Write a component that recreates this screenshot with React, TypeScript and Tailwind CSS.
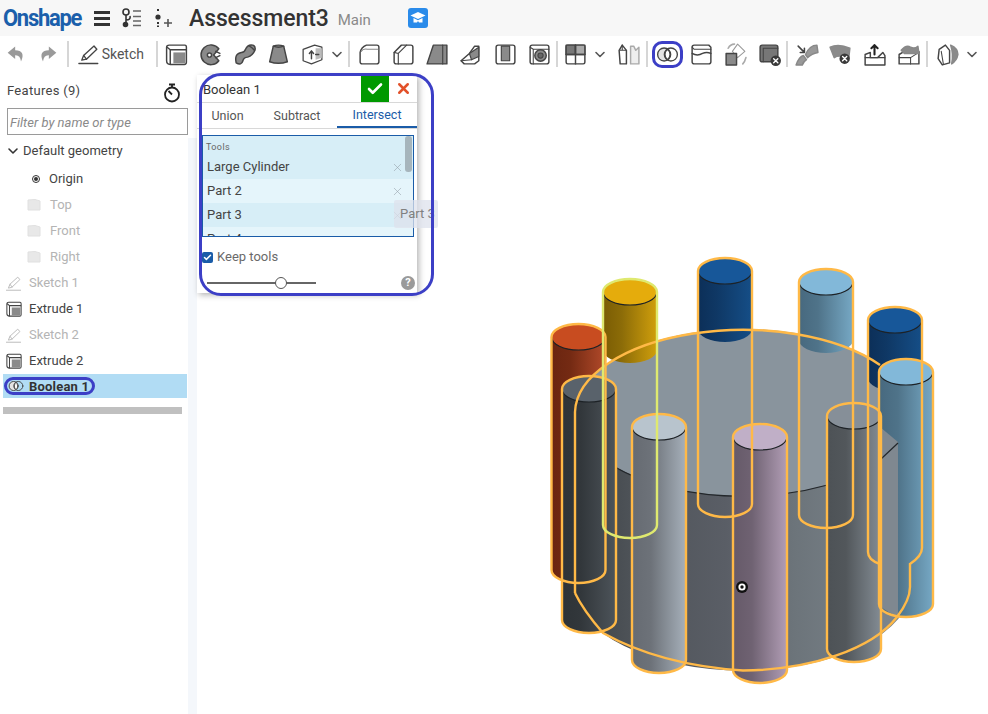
import { ChevronDown, Check, X } from "lucide-react";
import type { ReactNode } from "react";

const font = "font-['Roboto','Liberation_Sans',sans-serif]";

function Ico({ children, size = 25, className = "" }: { children: ReactNode; size?: number; className?: string }) {
  return (
    <svg width={size} height={size} viewBox="0 0 24 24" fill="none" stroke="#444" strokeWidth="1.4" strokeLinejoin="round" strokeLinecap="round" className={className}>
      {children}
    </svg>
  );
}

const G = "#8a8a8a";

const Pencil = ({ size = 25, className = "" }: { size?: number; className?: string }) => (
  <Ico size={size} className={className}>
    <path d="M5 18 L7 13 L18 3 L21 6.5 L10 17 Z" fill="#fff" />
    <path d="M2 21.5 H22" />
    <path d="M7 13 L10 17" />
  </Ico>
);
const Extrude = ({ size = 25 }: { size?: number }) => (
  <Ico size={size}>
    <path d="M2.5 5 Q2.5 3 5 3 H20 Q21.5 3 21.5 5 V19.5 Q21.5 21.5 19.5 21.5 H6 Q2.5 21.5 2.5 18 Z" fill="#fff" />
    <path d="M6 21 V7.5 H21" />
    <rect x="9" y="10" width="11.5" height="10.5" fill={G} stroke="none" />
    <path d="M3 5 L6 7.5" />
  </Ico>
);
const Revolve = () => (
  <Ico>
    <path d="M20 6.5 A9.5 9.5 0 1 0 20 18 L15 12.5 Z" fill={G} />
    <circle cx="11" cy="12.5" r="2" fill="#fff" />
    <path d="M17 9 L21 11 M17 15 L21 13" />
  </Ico>
);
const Sweep = () => (
  <Ico>
    <path d="M4 20 Q2 11 9 10 Q12 10 13 7 Q15 2 20 3 Q23 4 22 8 Q20 13 15 14.5 Q11 15 10.5 18 Q9 23 4 20 Z" fill={G} />
    <path d="M16 3.5 Q19 5 21.5 8" />
  </Ico>
);
const Loft = () => (
  <Ico>
    <path d="M7 4 Q12 2 17 4 L20.5 19 Q12 22 3.5 19 Z" fill={G} />
    <path d="M7 4 Q12 6 17 4" />
  </Ico>
);
const Thicken = () => (
  <Ico>
    <path d="M3 7 L14 3 L21 5 V17 L11 21 L3 18 Z" fill="#fff" strokeWidth="1.2" />
    <path d="M15 6 V17 L21 15 V6 Z" fill="#bbb" stroke="none" />
    <path d="M11 9 V16 M9 11 L11 8.5 L13 11 M15 12 H18" strokeWidth="1.4" />
  </Ico>
);
const Fillet = () => (
  <Ico>
    <path d="M3 10 Q4 5 9 3 H19 Q21 3 21 5 V19 Q21 21 19 21 H5 Q3 21 3 19 Z" fill="#fff" />
    <path d="M4 9 Q6 6 10 7 H20" strokeWidth="1.1" stroke="#888" />
  </Ico>
);
const Chamfer = () => (
  <Ico>
    <path d="M3 10 L10 3 H19 Q21 3 21 5 V19 Q21 21 19 21 H5 Q3 21 3 19 Z" fill="#fff" />
    <path d="M3 10 L7 11 L15 3 M7 11 V21" strokeWidth="1.1" />
  </Ico>
);
const Draft = () => (
  <Ico>
    <path d="M8 3 H21 V21 H2 Z" fill={G} />
    <path d="M17 3 V21" strokeWidth="1.1" />
  </Ico>
);
const Rib = () => (
  <Ico>
    <path d="M2 18 L10 11 L15 4 L19 4 V18 L15 21 H5 Z" fill="#fff" />
    <path d="M10 11 L12 17 L19 14 V5 Z" fill={G} strokeWidth="1.1" />
    <path d="M2 18 L12 17" strokeWidth="1.1" />
  </Ico>
);
const ShellBox = () => (
  <Ico>
    <path d="M3 5 Q3 3 5 3 H19 Q21 3 21 5 V19 Q21 21 19 21 H5 Q3 21 3 19 Z" fill="#fff" />
    <path d="M8 4 V18 H16 V4 Z" fill={G} strokeWidth="1.1" />
  </Ico>
);
const Hole = () => (
  <Ico>
    <path d="M3 5 Q3 3 5 3 H19 Q21 3 21 5 V19 Q21 21 19 21 H5 Q3 21 3 19 Z" fill="#fff" />
    <circle cx="13" cy="13" r="5.5" fill={G} />
    <circle cx="13" cy="13" r="2.5" fill="#666" strokeWidth="1" />
    <path d="M3 5 L6 7 H21 M6 7 V21" strokeWidth="1" />
  </Ico>
);
const Pattern = () => (
  <Ico>
    <rect x="3" y="3" width="18" height="18" rx="1.5" fill="#fff" />
    <rect x="3" y="3" width="9" height="9" fill="#777" />
    <rect x="12" y="3" width="9" height="9" fill="#aaa" />
    <path d="M3 12 H21 M12 3 V21" />
  </Ico>
);
const Mirror = () => (
  <Ico>
    <path d="M3 8 L6 3 L10 8 V21 H4 Z" fill="#fff" />
    <path d="M6 3 V8 M4 8 H10" strokeWidth="1" />
    <g stroke="#aaa">
      <path d="M14 4 H17 L19 8 L22 5 V21 H14 Z" fill="#eee" />
    </g>
  </Ico>
);
const BooleanIcon = ({ size = 23 }: { size?: number }) => (
  <Ico size={size}>
    <circle cx="8.5" cy="12" r="6.8" fill="#e4e4e4" />
    <circle cx="15.5" cy="12" r="6.8" fill="none" />
    <path d="M12 6.5 A7 7 0 0 1 12 17.5 A7 7 0 0 1 12 6.5 Z" fill="#fff" />
  </Ico>
);
const Split = () => (
  <Ico>
    <path d="M3 5 Q3 3 5 3 H19 L21 5 V19 Q21 21 19 21 H5 Q3 21 3 19 Z" fill="#fff" />
    <path d="M3 11 Q8 14 13 11 Q17 9 21 11" />
    <path d="M3 5 L5 7 H21" strokeWidth="1" />
  </Ico>
);
const Transform = () => (
  <Ico>
    <path d="M14 2 L21 9 L14 15 L9 9 Z" fill="#fff" stroke="#999" strokeWidth="1" />
    <path d="M3 11 H13 V22 H3 Z" fill={G} />
    <path d="M5 6 Q7 2 11 2 M19 21 Q21 19 22 15" stroke="#aaa" strokeWidth="1.6" />
  </Ico>
);
const XDot = ({ cx = 18, cy = 18 }: { cx?: number; cy?: number }) => (
  <>
    <circle cx={cx} cy={cy} r="5" fill="#3a3a3a" stroke="none" />
    <path d={`M${cx - 2} ${cy - 2} L${cx + 2} ${cy + 2} M${cx + 2} ${cy - 2} L${cx - 2} ${cy + 2}`} stroke="#fff" strokeWidth="1.3" />
  </>
);
const DeletePart = () => (
  <Ico>
    <path d="M3 5 Q3 3 5 3 H18 Q20 3 20 5 V19 H5 Q3 19 3 17 Z" fill="#777" />
    <path d="M6 19 V6 H20" strokeWidth="1" />
    <XDot />
  </Ico>
);
const MoveFace = () => (
  <Ico>
    <path d="M11 12 Q15 3 22 3 L23 10 Q17 11 13 15 Z" fill="#999" stroke="#888" />
    <path d="M2 22 Q5 14 9 13 L12 17 Q9 19 8 22 Z" fill="#999" stroke="#888" />
    <path d="M4 4 L10 10 M10 6 V10 H6" strokeWidth="1.5" />
  </Ico>
);
const DeleteFace = () => (
  <Ico>
    <path d="M2 5 Q10 1 21 6 L20 15 Q10 12 6 15 Z" fill="#8a8a8a" stroke="#8a8a8a" />
    <XDot cx={16} cy={16} />
  </Ico>
);
const ReplaceFace = () => (
  <Ico>
    <path d="M3 12 L8 10 V15 H15 L20 10 L22 13 V22 H3 Z" fill="#fff" />
    <path d="M3 15 H22" strokeWidth="1" />
    <path d="M12 12 V3 M9 6 L12 3 L15 6" strokeWidth="2" stroke="#222" />
  </Ico>
);
const OffsetSurface = () => (
  <Ico>
    <path d="M3 12 L8 9 H22 V21 H3 Z" fill="#fff" />
    <path d="M3 15 H14 V21 M14 15 L22 10" strokeWidth="1" />
    <path d="M5 8 Q10 2 14 5 Q18 7 21 4 L22 11 H8 Z" fill={G} stroke="#888" />
  </Ico>
);
const Wrap = () => (
  <Ico>
    <path d="M4 7 L10 3 L14 8 V20 L7 22 L3 16 Z" fill="#fff" />
    <path d="M6 9 L8 21" strokeWidth="1" />
    <path d="M15 3 Q22 6 22 12 Q21 18 16 21 Q18 12 15 3 Z" fill={G} stroke="#888" />
  </Ico>
);
const UndoArrow = ({ flip }: { flip?: boolean }) => (
  <svg width="20" height="20" viewBox="0 0 24 24" className={flip ? "-scale-x-100" : ""}>
    <path d="M11 3 L2 10.5 L11 18 V13.5 Q17 13 18 21 Q24 8 11 7.5 Z" fill="#9a9a9a" />
  </svg>
);

const Sep = ({ className }: { className: string }) => <div className={`w-[2px] h-[26px] bg-[#d6d6d6] shrink-0 ${className}`} />;
const Slot = ({ children, className = "" }: { children: ReactNode; className?: string }) => (
  <div className={`w-[34px] h-full flex items-center justify-center shrink-0 relative ${className}`}>{children}</div>
);
const Chev = () => (
  <div className="w-[16px] flex justify-center shrink-0">
    <ChevronDown size={17} strokeWidth={2.4} className="text-[#555]" />
  </div>
);

type Peg = { cx: number; cy: number; end: number; dark: string; mid: string; light: string; top: string; line?: string; short?: boolean };

const BACK: Peg[] = [
  { cx: 630, cy: 292, end: 525, dark: "#7a5c04", mid: "#8c6c08", light: "#d09f0c", top: "#e5ac0c", line: "#dfe96f", short: true },
  { cx: 725, cy: 271, end: 504, dark: "#0c2f58", mid: "#0f3865", light: "#154e87", top: "#175799", short: true },
  { cx: 826, cy: 282, end: 515, dark: "#47697f", mid: "#4f7389", light: "#76a8c4", top: "#82b8d9", short: true },
  { cx: 895, cy: 320, end: 551, dark: "#0c2f58", mid: "#0f3865", light: "#154e87", top: "#175799", short: true },
];
const FRONT: Peg[] = [
  { cx: 589, cy: 389, end: 620, dark: "#2e3337", mid: "#32373b", light: "#4d545a", top: "#59626b" },
  { cx: 659, cy: 427, end: 660, dark: "#666b72", mid: "#6d7279", light: "#a6b0ba", top: "#b8c4cd" },
  { cx: 854, cy: 416, end: 649, dark: "#4d5256", mid: "#52575b", light: "#838c94", top: "#868f98" },
  { cx: 760, cy: 437, end: 670, dark: "#665a69", mid: "#6f6272", light: "#b19db5", top: "#c0afc7" },
  { cx: 906, cy: 372, end: 604, dark: "#47697f", mid: "#4f7389", light: "#76a8c4", top: "#82b8d9" },
];
const RED: Peg = { cx: 578.5, cy: 337, end: 570, dark: "#6a2510", mid: "#742a13", light: "#b24a2a", top: "#c84c20" };

const RX = 27;
const RY = 13;

function PegBody({ p, id }: { p: Peg; id: string }) {
  const l = p.cx - RX;
  const r = p.cx + RX;
  const bottom = p.short ? p.cy + 58 : p.end;
  return (
    <g>
      <path d={`M${l} ${p.cy} L${l} ${bottom} A${RX} ${RY} 0 0 0 ${r} ${bottom} L${r} ${p.cy} Z`} fill={`url(#${id})`} />
      <ellipse cx={p.cx} cy={p.cy} rx={RX} ry={RY} fill={p.top} />
      <path d={`M${l} ${p.cy} A${RX} ${RY} 0 0 0 ${r} ${p.cy}`} fill="none" stroke="#1d2226" strokeWidth="1.2" />
    </g>
  );
}

function PegLine({ p }: { p: Peg }) {
  const l = p.cx - RX;
  const r = p.cx + RX;
  return (
    <path
      d={`M${l} ${p.end} L${l} ${p.cy} A${RX} ${RY} 0 0 1 ${r} ${p.cy} L${r} ${p.end} A${RX} ${RY} 0 0 1 ${l} ${p.end} Z`}
      fill="none"
      stroke={p.line ?? "#ffb947"}
      strokeWidth="2.4"
    />
  );
}

function Model() {
  const all = [RED, ...BACK, ...FRONT];
  return (
    <svg width="791" height="640" viewBox="197 74 791 640" className="absolute left-0 top-0">
      <defs>
        {all.map((p, i) => (
          <linearGradient key={i} id={`peg${i}`} x1="0" x2="1" y1="0" y2="0">
            <stop offset="0" stopColor={p.dark} />
            <stop offset="0.35" stopColor={p.mid} />
            <stop offset="1" stopColor={p.light} />
          </linearGradient>
        ))}
        <linearGradient id="disc" x1="0" x2="1" y1="0" y2="0">
          <stop offset="0" stopColor="#3b4044" />
          <stop offset="0.17" stopColor="#4e5358" />
          <stop offset="0.45" stopColor="#5a5e66" />
          <stop offset="0.65" stopColor="#6c747a" />
          <stop offset="1" stopColor="#7f8890" />
        </linearGradient>
      </defs>

      <PegBody p={RED} id="peg0" />
      <path d="M575 412 L575 587 A168 83.5 0 0 0 911 587 L911 412 Z" fill="url(#disc)" />
      <ellipse cx="743" cy="412.5" rx="168" ry="83.5" fill="#89949d" />
      <path d="M603 459 A168 83.5 0 0 0 898 445" fill="none" stroke="#23272b" strokeWidth="1.2" />
      {BACK.map((p, i) => (
        <PegBody key={i} p={p} id={`peg${i + 1}`} />
      ))}
      {FRONT.map((p, i) => (
        <PegBody key={i} p={p} id={`peg${i + 5}`} />
      ))}
      <path d="M880 427 L898 442 L898 616 Q888 613 880 606 Z" fill="#7f8890" />
      <path d="M881 459 L898 443" stroke="#23272b" strokeWidth="1.2" />
      <path d="M881 440 V620" stroke="#3a4045" strokeWidth="1" />

      <circle cx="742" cy="587" r="6" fill="#111" />
      <circle cx="742" cy="587" r="3.6" fill="#fff" />
      <circle cx="742" cy="587" r="1.7" fill="#111" />

      <path d="M575 593 L575 412 A168 83.5 0 0 1 880 365" fill="none" stroke="#ffb947" strokeWidth="2.4" />
      <path d="M575 593 Q583 610 603 633 Q660 665 743 670.5 A168 83.5 0 0 0 897 617 Q910 600 910 587 L910 564 Q922 556 922 548 L922 320 A27 13 0 0 0 868 320 L868 552 Q868 560 880 564" fill="none" stroke="#ffb947" strokeWidth="2.4" />
      {[RED, BACK[1], BACK[2], ...FRONT].map((p, i) => (
        <PegLine key={i} p={p} />
      ))}
      <PegLine p={BACK[0]} />
    </svg>
  );
}

function TreeRow({ icon, label, light, indent = "pl-[5px]", gap = "w-[24px]" }: { icon: ReactNode; label: string; light?: boolean; indent?: string; gap?: string }) {
  return (
    <div className={`h-[26px] flex items-center ${indent}`}>
      <div className={`${gap} flex items-center shrink-0`}>{icon}</div>
      <span className={light ? "text-[#b4b4b4]" : "text-[#444]"}>{label}</span>
    </div>
  );
}

const Plane = () => (
  <svg width="14" height="12" viewBox="0 0 14 12">
    <path d="M1 1 L8 0.5 L13 2 V11 L1 11 Z" fill="#e8e8e8" stroke="#e0e0e0" />
  </svg>
);

function Sidebar() {
  return (
    <aside className="w-[197px] shrink-0 bg-white relative text-[13px] flex">
      <div className="w-[188px] shrink-0 flex flex-col">
        <div className="h-[34px] pl-[7px] pr-[6px] flex items-center justify-between">
          <span className="text-[#444] -mt-[1px] tracking-[0.3px]">Features (9)</span>
          <svg width="20" height="20" viewBox="0 0 20 20" fill="none" stroke="#222" strokeWidth="1.8" className="mt-[3px]">
            <circle cx="10" cy="11.5" r="7" />
            <path d="M7 1.5 H13 M10 1.5 V4 M10 11.5 L6.5 8" />
          </svg>
        </div>
        <div className="ml-[7px] h-[27px] w-[181px] border border-[#9a9a9a] flex items-center pl-[2px] pt-[2px] italic text-[#8a8a8a] shrink-0">Filter by name or type</div>
        <div className="mt-[3px] flex flex-col">
          <div className="h-[26px] flex items-center pl-[5px] text-[#444]">
            <ChevronDown size={18} strokeWidth={2.4} className="text-[#333] w-[16px]" />
            <span className="ml-[2px]">Default geometry</span>
          </div>
          <div className="h-[2px]" />
          <TreeRow indent="pl-[32px]" gap="w-[17px]" label="Origin" icon={<span className="w-[8px] h-[8px] rounded-full border border-[#333] flex items-center justify-center"><span className="w-[4px] h-[4px] rounded-full bg-[#333]" /></span>} />
          <TreeRow indent="pl-[27px]" gap="w-[23px]" label="Top" light icon={<Plane />} />
          <TreeRow indent="pl-[27px]" gap="w-[23px]" label="Front" light icon={<Plane />} />
          <TreeRow indent="pl-[27px]" gap="w-[23px]" label="Right" light icon={<Plane />} />
          <TreeRow label="Sketch 1" light icon={<Pencil size={17} className="opacity-35" />} />
          <TreeRow label="Extrude 1" icon={<Extrude size={18} />} />
          <TreeRow label="Sketch 2" light icon={<Pencil size={17} className="opacity-35" />} />
          <TreeRow label="Extrude 2" icon={<Extrude size={18} />} />
          <div className="ml-[3px] mr-[1px] h-[24px] bg-[#b1dcf4] relative flex items-center pl-[3px]">
            <div className="w-[23px] flex items-center pl-[2px]">
              <BooleanIcon size={16} />
            </div>
            <span className="text-[#333] font-bold tracking-[0.2px] pt-[1px]">Boolean 1</span>
            <div className="absolute left-[1px] top-[3px] w-[91px] h-[18px] rounded-full border-[3px] border-[#3c3fc6]" />
          </div>
          <div className="ml-[3px] mt-[9px] w-[179px] h-[7px] bg-[#c0c0c0]" />
        </div>
      </div>
      <div className="flex-1 mt-[64px] bg-[#f4f7fb]" />
    </aside>
  );
}

function ToolRow({ label, even }: { label: string; even?: boolean }) {
  return (
    <div className={`h-[24px] flex items-center pl-[4px] pr-[9px] justify-between ${even ? "bg-[#e5f5fb]" : "bg-[#d7eef7]"}`}>
      <span className="text-[#444]">{label}</span>
      <X size={13} strokeWidth={1} className="text-[#8f9ba3]" />
    </div>
  );
}

function BooleanDialog() {
  return (
    <div className="absolute left-0 top-[1px] w-[220px] h-[218px] bg-white shadow-[2px_2px_6px_rgba(0,0,0,0.3)] text-[13px]">
      <div className="h-[28px] border-b border-[#d8d8d8] flex items-stretch">
        <span className="flex-1 pl-[6px] pt-[2px] flex items-center text-[#333]">Boolean 1</span>
        <div className="w-[28px] bg-[#009900] flex items-center justify-center">
          <Check size={18} strokeWidth={3.5} className="text-white" />
        </div>
        <div className="w-[28px] flex items-center justify-center">
          <X size={17} strokeWidth={3.5} className="text-[#e2512a]" />
        </div>
      </div>
      <div className="h-[26px] border-b border-[#d8d8d8] flex text-center items-stretch pl-[2px] text-[12.5px]">
        <span className="w-[57px] pt-[2px] flex items-center justify-center text-[#555]">Union</span>
        <span className="w-[80px] pt-[2px] flex items-center justify-center text-[#555] ml-[1px]">Subtract</span>
        <span className="w-[80px] pt-[2px] flex items-center justify-center text-[#1a5ca8] border-b-2 border-[#1a5ca8]">Intersect</span>
      </div>
      <div className="mt-[6px] ml-[5px] w-[212px] h-[102px] border border-[#1a5ca8] overflow-hidden relative">
        <div className="bg-[#d7eef7] h-[19px] pl-[3px] pt-[5px] text-[9px] leading-[12px] text-[#666] tracking-[0.4px]">Tools</div>
        <ToolRow label="Large Cylinder" />
        <ToolRow label="Part 2" even />
        <ToolRow label="Part 3" />
        <ToolRow label="Part 4" even />
        <div className="absolute right-[1px] top-0 w-[7px] h-[36px] rounded-[3px] bg-[#a6b5bc]" />
      </div>
      <div className="absolute left-[197px] top-[125px] w-[44px] h-[28px] bg-[#dde2ec]/75 rounded-[2px] flex items-center pl-[6px] text-[#808080]">Part 3</div>
      <div className="mt-[12px] ml-[5px] flex items-center gap-[4px] h-[16px]">
        <span className="w-[11px] h-[11px] rounded-[2px] bg-[#1a5ca8] flex items-center justify-center">
          <Check size={9} strokeWidth={4} className="text-white" />
        </span>
        <span className="text-[#6a6a6a]">Keep tools</span>
      </div>
      <div className="mt-[10px] ml-[10px] mr-[2px] h-[16px] flex items-center justify-between">
        <div className="w-[109px] h-[2px] bg-[#666] relative">
          <span className="absolute left-[68px] -top-[5px] w-[12px] h-[12px] rounded-full bg-white border border-[#555]" />
        </div>
        <span className="w-[14px] h-[14px] rounded-full bg-[#9a9a9a] text-white text-[11px] leading-[14px] font-bold text-center">?</span>
      </div>
    </div>
  );
}

export default function App() {
  return (
    <div className={`${font} w-[988px] h-[714px] overflow-hidden bg-white flex flex-col relative`}>
      <header className="h-[36px] bg-[#f7f7f7] flex items-center shrink-0">
        <span className="ml-[3px] w-[79px] text-[22px] font-bold text-[#1b5fab] tracking-[-1.3px] leading-none scale-y-110">Onshape</span>
        <div className="ml-[12px] w-[16px] flex flex-col gap-[3px]">
          <span className="h-[3px] bg-[#333]" />
          <span className="h-[3px] bg-[#333]" />
          <span className="h-[3px] bg-[#333]" />
        </div>
        <svg width="22" height="20" viewBox="0 0 22 20" fill="none" stroke="#333" strokeWidth="1.6" className="ml-[11px]">
          <circle cx="5" cy="4" r="3" />
          <circle cx="4.5" cy="16.5" r="2" fill="#333" />
          <path d="M5 7 V14.5 M5 12 Q10 12 9 8" />
          <path d="M12 3 H20 M12 8.5 H20 M12 13 H20 M12 17.5 H20" stroke="#666" />
        </svg>
        <svg width="18" height="20" viewBox="0 0 18 20" fill="none" stroke="#333" className="ml-[12px]">
          <circle cx="3" cy="9" r="2.6" fill="#333" stroke="none" />
          <path d="M3 1 V4 M3 14 V19" strokeWidth="2" strokeDasharray="2 1.5" />
          <path d="M9 15 H17 M13 11 V19" strokeWidth="1.6" stroke="#555" />
        </svg>
        <span className="ml-[16px] text-[23px] font-medium text-[#333] tracking-[-0.1px] leading-none">Assessment3</span>
        <span className="ml-[9px] mt-[4px] text-[15px] text-[#8a8a8a]">Main</span>
        <div className="ml-[37px] w-[20px] h-[20px] rounded-[3px] bg-[#2a8bea] flex items-center justify-center">
          <svg width="16" height="14" viewBox="0 0 16 14">
            <path d="M8 1 L15.5 4.5 L8 8 L0.5 4.5 Z" fill="#fff" />
            <path d="M3.5 7 V11.5 H7 L8 10 L9 11.5 H12.5 V7 L8 9.2 Z" fill="#fff" />
          </svg>
        </div>
      </header>

      <div className="h-[38px] pb-[2px] flex items-center shrink-0 bg-white">
        <div className="w-[31px] flex justify-center"><UndoArrow /></div>
        <div className="w-[34px] flex justify-center"><UndoArrow flip /></div>
        <Sep className="ml-[2px]" />
        <div className="ml-[8px] flex items-center gap-[2px] w-[67px]">
          <Pencil size={23} />
          <span className="text-[14px] text-[#555]">Sketch</span>
        </div>
        <Sep className="ml-[12px]" />
        <div className="ml-[1px] flex items-center h-full">
          <Slot><Extrude /></Slot>
          <Slot><Revolve /></Slot>
          <Slot><Sweep /></Slot>
          <Slot><Loft /></Slot>
          <Slot><Thicken /></Slot>
          <Chev />
        </div>
        <Sep className="ml-[3px]" />
        <div className="ml-[2px] flex items-center h-full">
          <Slot><Fillet /></Slot>
          <Slot><Chamfer /></Slot>
          <Slot><Draft /></Slot>
          <Slot><Rib /></Slot>
          <Slot><ShellBox /></Slot>
          <Slot><Hole /></Slot>
        </div>
        <Sep className="" />
        <div className="flex items-center h-full">
          <Slot><Pattern /></Slot>
          <Chev />
          <Slot className="ml-[3px]"><Mirror /></Slot>
        </div>
        <Sep className="ml-[1px]" />
        <div className="ml-[2px] flex items-center h-full">
          <Slot>
            <BooleanIcon />
            <div className="absolute left-[2px] top-[5px] w-[31px] h-[27px] rounded-[10px] border-[3px] border-[#3c3fc6]" />
          </Slot>
          <Slot><Split /></Slot>
          <Slot><Transform /></Slot>
          <Slot><DeletePart /></Slot>
        </div>
        <Sep className="" />
        <div className="ml-[1px] flex items-center h-full">
          <Slot><MoveFace /></Slot>
          <Slot><DeleteFace /></Slot>
          <Slot><ReplaceFace /></Slot>
          <Slot><OffsetSurface /></Slot>
        </div>
        <Sep className="ml-[1px]" />
        <div className="ml-[2px] flex items-center h-full">
          <Slot><Wrap /></Slot>
          <Chev />
        </div>
      </div>

      <div className="flex-1 flex min-h-0">
        <Sidebar />
        <main className="flex-1 relative">
          <Model />
          <BooleanDialog />
          <div className="absolute left-[2px] -top-[1px] w-[235px] h-[223px] rounded-[22px] border-[3px] border-[#3c3fc6]" />
        </main>
      </div>
    </div>
  );
}
